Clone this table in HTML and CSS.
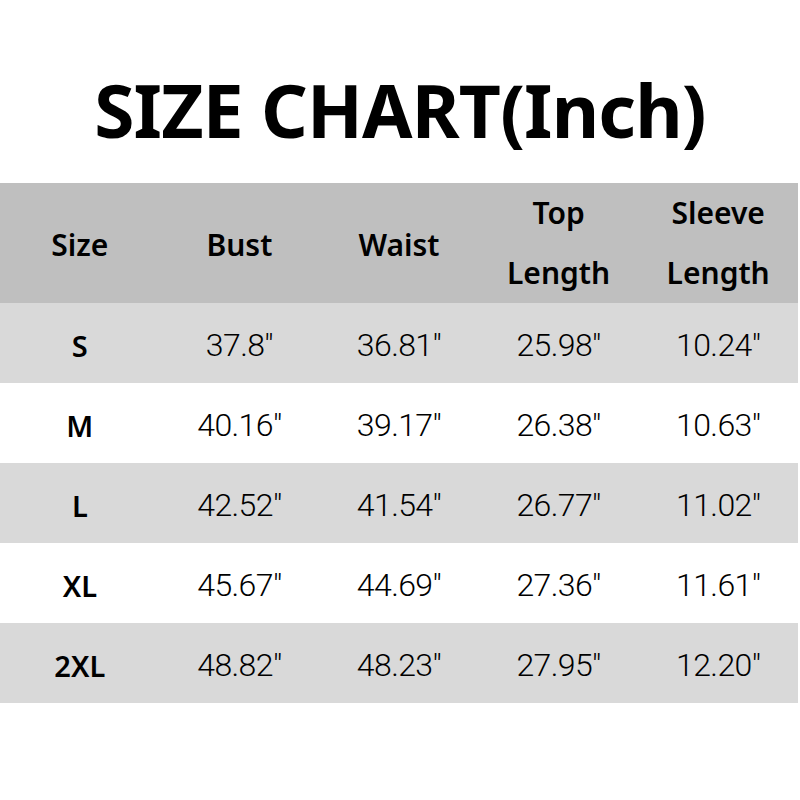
FILE: index.html
```html
<!DOCTYPE html>
<html>
<head>
<meta charset="utf-8">
<link rel="stylesheet" href="styles.css">
</head>
<body>
<div class="page">
  <h1 class="title">SIZE CHART(Inch)</h1>
  <table class="chart">
    <thead>
      <tr>
        <th>Size</th>
        <th>Bust</th>
        <th>Waist</th>
        <th class="two">Top<br>Length</th>
        <th class="two">Sleeve<br>Length</th>
      </tr>
    </thead>
    <tbody>
      <tr class="shade"><td class="sz">S</td><td>37.8"</td><td>36.81"</td><td>25.98"</td><td>10.24"</td></tr>
      <tr><td class="sz">M</td><td>40.16"</td><td>39.17"</td><td>26.38"</td><td>10.63"</td></tr>
      <tr class="shade"><td class="sz">L</td><td>42.52"</td><td>41.54"</td><td>26.77"</td><td>11.02"</td></tr>
      <tr><td class="sz">XL</td><td>45.67"</td><td>44.69"</td><td>27.36"</td><td>11.61"</td></tr>
      <tr class="shade"><td class="sz">2XL</td><td>48.82"</td><td>48.23"</td><td>27.95"</td><td>12.20"</td></tr>
    </tbody>
  </table>
</div>
</body>
</html>
```
FILE: styles.css
```css
html, body {
  margin: 0;
  padding: 0;
  background: #ffffff;
}
.page {
  width: 800px;
  height: 800px;
  display: flex;
  flex-direction: column;
}
.title {
  margin: 0;
  height: 183px;
  display: flex;
  align-items: center;
  justify-content: center;
  padding-top: 36px;
  box-sizing: border-box;
  font-family: "Noto Sans", sans-serif;
  font-weight: 700;
  font-size: 73px;
  color: #000;
  letter-spacing: -0.8px;
}
.chart {
  width: 798px;
  border-collapse: collapse;
  table-layout: fixed;
}
.chart th {
  background: #bfbfbf;
  height: 120px;
  padding: 4px 0 0;
  box-sizing: border-box;
  font-family: "Noto Sans", sans-serif;
  font-weight: 600;
  font-size: 30px;
  line-height: 60px;
  color: #000;
  text-align: center;
  vertical-align: middle;
}
.chart th.two {
  padding: 0;
}
.chart td {
  height: 80px;
  padding: 4px 0 0;
  box-sizing: border-box;
  text-align: center;
  vertical-align: middle;
  font-family: "Roboto", sans-serif;
  font-weight: 300;
  font-size: 32px;
  letter-spacing: -0.6px;
  color: #000;
}
.chart td.sz {
  font-family: "Noto Sans", sans-serif;
  font-weight: 600;
  font-size: 29px;
  letter-spacing: 0;
}
.chart tr.shade td {
  background: #d9d9d9;
}
```
